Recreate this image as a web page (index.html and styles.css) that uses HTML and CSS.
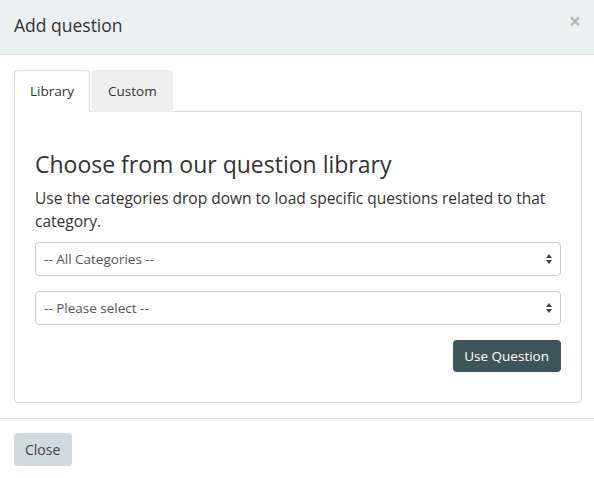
FILE: index.html
```html
<!DOCTYPE html>
<html>
<head>
<meta charset="utf-8">
<link rel="stylesheet" href="styles.css">
</head>
<body>
<div class="modal">
  <div class="modal-header">
    <h4 class="modal-title">Add question</h4>
    <span class="close">&times;</span>
  </div>
  <div class="modal-body">
    <ul class="tabs">
      <li class="tab active">Library</li>
      <li class="tab">Custom</li>
    </ul>
    <div class="tab-panel">
      <h3 class="panel-title">Choose from our question library</h3>
      <p class="panel-text">Use the categories drop down to load specific questions related to that category.</p>
      <div class="select"><span>-- All Categories --</span><svg class="arrows" width="6" height="10" viewBox="0 0 6 10"><path d="M3 0L6 4H0z M3 10L0 6h6z" fill="#444"/></svg></div>
      <div class="select"><span>-- Please select --</span><svg class="arrows" width="6" height="10" viewBox="0 0 6 10"><path d="M3 0L6 4H0z M3 10L0 6h6z" fill="#444"/></svg></div>
      <div class="actions"><button class="btn btn-primary">Use Question</button></div>
    </div>
  </div>
  <div class="modal-footer">
    <button class="btn btn-default">Close</button>
  </div>
</div>
</body>
</html>
```
FILE: styles.css
```css
* { box-sizing: border-box; }
html, body { margin: 0; padding: 0; background: #fff; }
body { font-family: "Open Sans", "Liberation Sans", sans-serif; color: #333; width: 594px; height: 478px; overflow: hidden; }
.modal { width: 594px; }
.modal-header { height: 55px; background: #ecf0f1; border-bottom: 1px solid #d5dadc; display: flex; align-items: center; justify-content: space-between; padding: 0 14px; }
.modal-title { margin: 0; font-size: 17.5px; font-weight: 400; color: #333; line-height: 1; padding-bottom: 2px; }
.close { font-size: 21px; font-weight: 700; color: #b4b8ba; line-height: 1; margin-right: -1px; padding-bottom: 11px; }
.modal-body { padding: 15px 12px 15px 14px; }
.tabs { list-style: none; margin: 0; padding: 0; display: flex; gap: 2px; height: 41px; }
.tab { height: 42px; padding: 0 15px; font-size: 13.5px; line-height: 41px; border: 1px solid transparent; border-radius: 4px 4px 0 0; background: #eee; color: #333; }
.tab.active { background: #fff; border-color: #ddd; border-bottom-color: #fff; position: relative; z-index: 1; }
.tab-panel { border: 1px solid #ddd; border-radius: 0 0 4px 4px; padding: 38px 20px 30px 20px; height: 292px; }
.panel-title { margin: 0; font-size: 23px; font-weight: 400; line-height: 28px; color: #333; }
.panel-text { margin: 9px 0 9px; font-size: 15.5px; line-height: 23px; }
.select { height: 34px; border: 1px solid #ccc; border-radius: 4px; display: flex; align-items: center; justify-content: space-between; padding: 0 8px 0 8px; font-size: 13.5px; color: #555; margin-bottom: 15px; }
.actions { display: flex; justify-content: flex-end; }
.btn { font-family: inherit; font-size: 14px; border: none; border-radius: 4px; height: 32px; padding: 0 10px; cursor: pointer; }
.btn-primary { background: #3d5558; color: #fff; font-size: 13.5px; padding: 0 12px 0 11px; }
.modal-footer { border-top: 1px solid #e5e5e5; padding: 14px 14px; margin-top: 0; }
.btn-default { background: #cfdbdf; color: #444; height: 33px; padding: 0 12px 0 11px; }
```
